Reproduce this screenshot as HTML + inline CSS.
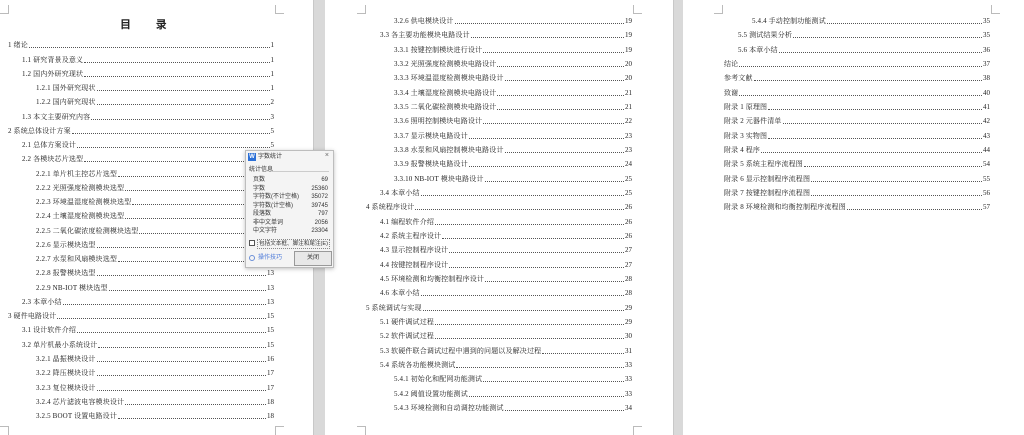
<!DOCTYPE html>
<html><head><meta charset="utf-8"><style>
*{margin:0;padding:0;box-sizing:border-box}
body{width:1024px;height:435px;overflow:hidden;background:#d9d9d9;position:relative;font-family:"Liberation Serif","Noto Serif CJK SC",serif;color:#222}
.pg{position:absolute;top:0;height:435px;background:#fff}
.r{position:absolute;height:10px;line-height:10px;font-size:7px;display:flex;align-items:flex-end;white-space:nowrap;letter-spacing:.15px}
.r .t{padding-right:1px}
.r .d{flex:1;border-bottom:1px dotted #555;margin-bottom:2px;height:1px}
.r .n{padding-left:1px;letter-spacing:0}
.c{position:absolute;width:9px;height:9px;border-color:#bbb;border-style:solid;border-width:0}
.title{position:absolute;left:120px;top:16px;font-size:11px;font-weight:bold;letter-spacing:11px;font-family:"Liberation Serif","Noto Sans CJK SC",sans-serif;color:#222}
.dlg{position:absolute;left:245px;top:150px;width:89px;height:118px;background:#f4f4f4;border:1px solid #bdbdbd;box-shadow:0 1px 4px rgba(0,0,0,.25);font-family:"Liberation Sans","Noto Sans CJK SC",sans-serif;font-size:6px;color:#333}
.dlg .row{position:absolute;left:7px;right:5px;display:flex;justify-content:space-between;height:8px;line-height:8px}
</style></head><body>
<div class="pg" style="left:0;width:313px"></div>
<div class="pg" style="left:325px;width:348px"></div>
<div class="pg" style="left:683px;width:341px"></div>
<div style="position:absolute;left:313px;top:0;width:1px;height:435px;background:#c8c8c8"></div>
<div style="position:absolute;left:673px;top:0;width:1px;height:435px;background:#c8c8c8"></div>

<div class="c" style="left:0;top:5px;border-bottom-width:1px;border-right-width:1px"></div>
<div class="c" style="left:275px;top:5px;border-bottom-width:1px;border-left-width:1px"></div>
<div class="c" style="left:0;top:426px;border-top-width:1px;border-right-width:1px"></div>
<div class="c" style="left:275px;top:426px;border-top-width:1px;border-left-width:1px"></div>
<div class="c" style="left:357px;top:5px;border-bottom-width:1px;border-right-width:1px"></div>
<div class="c" style="left:633px;top:5px;border-bottom-width:1px;border-left-width:1px"></div>
<div class="c" style="left:357px;top:426px;border-top-width:1px;border-right-width:1px"></div>
<div class="c" style="left:633px;top:426px;border-top-width:1px;border-left-width:1px"></div>
<div class="c" style="left:714px;top:5px;border-bottom-width:1px;border-right-width:1px"></div>
<div class="c" style="left:991px;top:5px;border-bottom-width:1px;border-left-width:1px"></div>

<div class="title">目 录</div>

<div class="r" style="top:40px;left:8px;width:266px"><span class="t">1 绪论</span><span class="d"></span><span class="n">1</span></div>
<div class="r" style="top:55px;left:22px;width:252px"><span class="t">1.1 研究背景及意义</span><span class="d"></span><span class="n">1</span></div>
<div class="r" style="top:69px;left:22px;width:252px"><span class="t">1.2 国内外研究现状</span><span class="d"></span><span class="n">1</span></div>
<div class="r" style="top:83px;left:36px;width:238px"><span class="t">1.2.1 国外研究现状</span><span class="d"></span><span class="n">1</span></div>
<div class="r" style="top:97px;left:36px;width:238px"><span class="t">1.2.2 国内研究现状</span><span class="d"></span><span class="n">2</span></div>
<div class="r" style="top:112px;left:22px;width:252px"><span class="t">1.3 本文主要研究内容</span><span class="d"></span><span class="n">3</span></div>
<div class="r" style="top:126px;left:8px;width:266px"><span class="t">2 系统总体设计方案</span><span class="d"></span><span class="n">5</span></div>
<div class="r" style="top:140px;left:22px;width:252px"><span class="t">2.1 总体方案设计</span><span class="d"></span><span class="n">5</span></div>
<div class="r" style="top:154px;left:22px;width:252px"><span class="t">2.2 各模块芯片选型</span><span class="d"></span><span class="n">5</span></div>
<div class="r" style="top:169px;left:36px;width:238px"><span class="t">2.2.1 单片机主控芯片选型</span><span class="d"></span><span class="n">5</span></div>
<div class="r" style="top:183px;left:36px;width:238px"><span class="t">2.2.2 光照强度检测模块选型</span><span class="d"></span><span class="n">7</span></div>
<div class="r" style="top:197px;left:36px;width:238px"><span class="t">2.2.3 环境温湿度检测模块选型</span><span class="d"></span><span class="n">8</span></div>
<div class="r" style="top:211px;left:36px;width:238px"><span class="t">2.2.4 土壤湿度检测模块选型</span><span class="d"></span><span class="n">9</span></div>
<div class="r" style="top:226px;left:36px;width:238px"><span class="t">2.2.5 二氧化碳浓度检测模块选型</span><span class="d"></span><span class="n">10</span></div>
<div class="r" style="top:240px;left:36px;width:238px"><span class="t">2.2.6 显示模块选型</span><span class="d"></span><span class="n">11</span></div>
<div class="r" style="top:254px;left:36px;width:238px"><span class="t">2.2.7 水泵和风扇模块选型</span><span class="d"></span><span class="n">12</span></div>
<div class="r" style="top:268px;left:36px;width:238px"><span class="t">2.2.8 报警模块选型</span><span class="d"></span><span class="n">13</span></div>
<div class="r" style="top:283px;left:36px;width:238px"><span class="t">2.2.9 NB-IOT 模块选型</span><span class="d"></span><span class="n">13</span></div>
<div class="r" style="top:297px;left:22px;width:252px"><span class="t">2.3 本章小结</span><span class="d"></span><span class="n">13</span></div>
<div class="r" style="top:311px;left:8px;width:266px"><span class="t">3 硬件电路设计</span><span class="d"></span><span class="n">15</span></div>
<div class="r" style="top:325px;left:22px;width:252px"><span class="t">3.1 设计软件介绍</span><span class="d"></span><span class="n">15</span></div>
<div class="r" style="top:340px;left:22px;width:252px"><span class="t">3.2 单片机最小系统设计</span><span class="d"></span><span class="n">15</span></div>
<div class="r" style="top:354px;left:36px;width:238px"><span class="t">3.2.1 晶振模块设计</span><span class="d"></span><span class="n">16</span></div>
<div class="r" style="top:368px;left:36px;width:238px"><span class="t">3.2.2 降压模块设计</span><span class="d"></span><span class="n">17</span></div>
<div class="r" style="top:383px;left:36px;width:238px"><span class="t">3.2.3 复位模块设计</span><span class="d"></span><span class="n">17</span></div>
<div class="r" style="top:397px;left:36px;width:238px"><span class="t">3.2.4 芯片滤波电容模块设计</span><span class="d"></span><span class="n">18</span></div>
<div class="r" style="top:411px;left:36px;width:238px"><span class="t">3.2.5 BOOT 设置电路设计</span><span class="d"></span><span class="n">18</span></div>

<div class="r" style="top:16px;left:394px;width:238px"><span class="t">3.2.6 供电模块设计</span><span class="d"></span><span class="n">19</span></div>
<div class="r" style="top:30px;left:380px;width:252px"><span class="t">3.3 各主要功能模块电路设计</span><span class="d"></span><span class="n">19</span></div>
<div class="r" style="top:45px;left:394px;width:238px"><span class="t">3.3.1 按键控制模块进行设计</span><span class="d"></span><span class="n">19</span></div>
<div class="r" style="top:59px;left:394px;width:238px"><span class="t">3.3.2 光照强度检测模块电路设计</span><span class="d"></span><span class="n">20</span></div>
<div class="r" style="top:73px;left:394px;width:238px"><span class="t">3.3.3 环境温湿度检测模块电路设计</span><span class="d"></span><span class="n">20</span></div>
<div class="r" style="top:88px;left:394px;width:238px"><span class="t">3.3.4 土壤湿度检测模块电路设计</span><span class="d"></span><span class="n">21</span></div>
<div class="r" style="top:102px;left:394px;width:238px"><span class="t">3.3.5 二氧化碳检测模块电路设计</span><span class="d"></span><span class="n">21</span></div>
<div class="r" style="top:116px;left:394px;width:238px"><span class="t">3.3.6 照明控制模块电路设计</span><span class="d"></span><span class="n">22</span></div>
<div class="r" style="top:131px;left:394px;width:238px"><span class="t">3.3.7 显示模块电路设计</span><span class="d"></span><span class="n">23</span></div>
<div class="r" style="top:145px;left:394px;width:238px"><span class="t">3.3.8 水泵和风扇控制模块电路设计</span><span class="d"></span><span class="n">23</span></div>
<div class="r" style="top:159px;left:394px;width:238px"><span class="t">3.3.9 报警模块电路设计</span><span class="d"></span><span class="n">24</span></div>
<div class="r" style="top:174px;left:394px;width:238px"><span class="t">3.3.10 NB-IOT 模块电路设计</span><span class="d"></span><span class="n">25</span></div>
<div class="r" style="top:188px;left:380px;width:252px"><span class="t">3.4 本章小结</span><span class="d"></span><span class="n">25</span></div>
<div class="r" style="top:202px;left:366px;width:266px"><span class="t">4 系统程序设计</span><span class="d"></span><span class="n">26</span></div>
<div class="r" style="top:217px;left:380px;width:252px"><span class="t">4.1 编程软件介绍</span><span class="d"></span><span class="n">26</span></div>
<div class="r" style="top:231px;left:380px;width:252px"><span class="t">4.2 系统主程序设计</span><span class="d"></span><span class="n">26</span></div>
<div class="r" style="top:245px;left:380px;width:252px"><span class="t">4.3 显示控制程序设计</span><span class="d"></span><span class="n">27</span></div>
<div class="r" style="top:260px;left:380px;width:252px"><span class="t">4.4 按键控制程序设计</span><span class="d"></span><span class="n">27</span></div>
<div class="r" style="top:274px;left:380px;width:252px"><span class="t">4.5 环境检测和均衡控制程序设计</span><span class="d"></span><span class="n">28</span></div>
<div class="r" style="top:288px;left:380px;width:252px"><span class="t">4.6 本章小结</span><span class="d"></span><span class="n">28</span></div>
<div class="r" style="top:303px;left:366px;width:266px"><span class="t">5 系统调试与实现</span><span class="d"></span><span class="n">29</span></div>
<div class="r" style="top:317px;left:380px;width:252px"><span class="t">5.1 硬件调试过程</span><span class="d"></span><span class="n">29</span></div>
<div class="r" style="top:331px;left:380px;width:252px"><span class="t">5.2 软件调试过程</span><span class="d"></span><span class="n">30</span></div>
<div class="r" style="top:346px;left:380px;width:252px"><span class="t">5.3 软硬件联合调试过程中遇到的问题以及解决过程</span><span class="d"></span><span class="n">31</span></div>
<div class="r" style="top:360px;left:380px;width:252px"><span class="t">5.4 系统各功能模块测试</span><span class="d"></span><span class="n">33</span></div>
<div class="r" style="top:374px;left:394px;width:238px"><span class="t">5.4.1 初始化和配网功能测试</span><span class="d"></span><span class="n">33</span></div>
<div class="r" style="top:389px;left:394px;width:238px"><span class="t">5.4.2 阈值设置功能测试</span><span class="d"></span><span class="n">33</span></div>
<div class="r" style="top:403px;left:394px;width:238px"><span class="t">5.4.3 环境检测和自动调控功能测试</span><span class="d"></span><span class="n">34</span></div>

<div class="r" style="top:16px;left:752px;width:238px"><span class="t">5.4.4 手动控制功能测试</span><span class="d"></span><span class="n">35</span></div>
<div class="r" style="top:30px;left:738px;width:252px"><span class="t">5.5 测试结果分析</span><span class="d"></span><span class="n">35</span></div>
<div class="r" style="top:45px;left:738px;width:252px"><span class="t">5.6 本章小结</span><span class="d"></span><span class="n">36</span></div>
<div class="r" style="top:59px;left:724px;width:266px"><span class="t">结论</span><span class="d"></span><span class="n">37</span></div>
<div class="r" style="top:73px;left:724px;width:266px"><span class="t">参考文献</span><span class="d"></span><span class="n">38</span></div>
<div class="r" style="top:88px;left:724px;width:266px"><span class="t">致谢</span><span class="d"></span><span class="n">40</span></div>
<div class="r" style="top:102px;left:724px;width:266px"><span class="t">附录 1 原理图</span><span class="d"></span><span class="n">41</span></div>
<div class="r" style="top:116px;left:724px;width:266px"><span class="t">附录 2 元器件清单</span><span class="d"></span><span class="n">42</span></div>
<div class="r" style="top:131px;left:724px;width:266px"><span class="t">附录 3 实物图</span><span class="d"></span><span class="n">43</span></div>
<div class="r" style="top:145px;left:724px;width:266px"><span class="t">附录 4 程序</span><span class="d"></span><span class="n">44</span></div>
<div class="r" style="top:159px;left:724px;width:266px"><span class="t">附录 5 系统主程序流程图</span><span class="d"></span><span class="n">54</span></div>
<div class="r" style="top:174px;left:724px;width:266px"><span class="t">附录 6 显示控制程序流程图</span><span class="d"></span><span class="n">55</span></div>
<div class="r" style="top:188px;left:724px;width:266px"><span class="t">附录 7 按键控制程序流程图</span><span class="d"></span><span class="n">56</span></div>
<div class="r" style="top:202px;left:724px;width:266px"><span class="t">附录 8 环境检测和均衡控制程序流程图</span><span class="d"></span><span class="n">57</span></div>

<div class="dlg">
  <div style="position:absolute;left:2px;top:2px;width:8px;height:8px;background:#2b6fd6;color:#fff;font-size:6px;font-weight:bold;text-align:center;line-height:8px">W</div>
  <div style="position:absolute;left:12px;top:2px;line-height:8px">字数统计</div>
  <div style="position:absolute;right:4px;top:1px;line-height:8px;font-size:7px;color:#666">×</div>
  <div style="position:absolute;left:3px;top:16px;line-height:7px">统计信息</div>
  <div style="position:absolute;left:26px;right:4px;top:20px;height:1px;background:#ccc"></div>
  <div class="row" style="top:25px"><span>页数</span><span>69</span></div>
  <div class="row" style="top:33.5px"><span>字数</span><span>25360</span></div>
  <div class="row" style="top:42px"><span>字符数(不计空格)</span><span>35072</span></div>
  <div class="row" style="top:50.5px"><span>字符数(计空格)</span><span>39745</span></div>
  <div class="row" style="top:59px"><span>段落数</span><span>797</span></div>
  <div class="row" style="top:67.5px"><span>非中文单词</span><span>2056</span></div>
  <div class="row" style="top:76px"><span>中文字符</span><span>23304</span></div>
  <div style="position:absolute;left:3px;top:89px;width:6px;height:6px;border:1px solid #555;background:#fff"></div>
  <div style="position:absolute;left:11px;top:88px;line-height:8px;border:1px dotted #888;padding:0 1px;font-size:5.6px">包括文本框、脚注和尾注(E)</div>
  <div style="position:absolute;left:3px;top:104px;width:6px;height:6px;border:1px solid #6a8fd8;border-radius:50%"></div>
  <div style="position:absolute;left:12px;top:103px;line-height:8px;color:#4a78d8">操作技巧</div>
  <div style="position:absolute;left:48px;top:100px;width:38px;height:15px;border:1px solid #999;background:#e8e8e8;text-align:center;line-height:13px">关闭</div>
</div>
</body></html>
